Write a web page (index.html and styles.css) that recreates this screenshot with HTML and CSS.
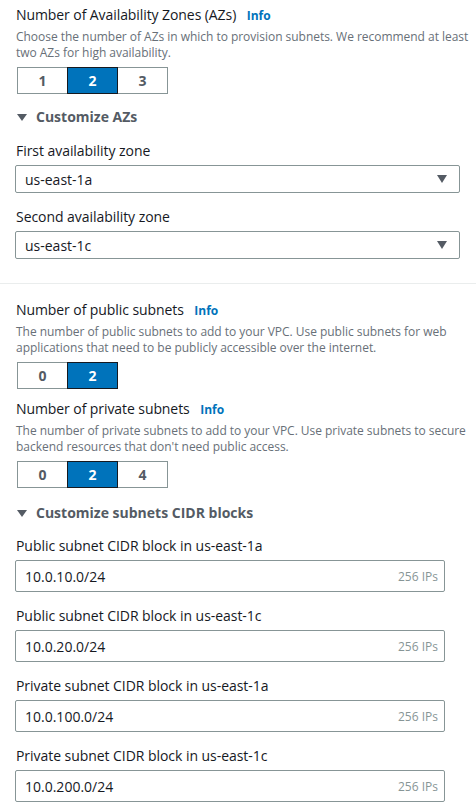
FILE: index.html
```html
<!DOCTYPE html>
<html>
<head>
<meta charset="utf-8">
<link rel="stylesheet" href="styles.css">
</head>
<body>
<div class="page">
  <section class="sec sec-top">
    <div class="title">Number of Availability Zones (AZs) <span class="info">Info</span></div>
    <p class="desc">Choose the number of AZs in which to provision subnets. We recommend at least two AZs for high availability.</p>
    <div class="seg">
      <span class="seg-item">1</span>
      <span class="seg-item on">2</span>
      <span class="seg-item">3</span>
    </div>
    <div class="expander"><span class="caret"></span>Customize AZs</div>
    <div class="field">
      <div class="label">First availability zone</div>
      <div class="select">us-east-1a<span class="arrow"></span></div>
    </div>
    <div class="field">
      <div class="label">Second availability zone</div>
      <div class="select">us-east-1c<span class="arrow"></span></div>
    </div>
  </section>
  <hr class="divider">
  <section class="sec sec-sub">
    <div class="title">Number of public subnets <span class="info">Info</span></div>
    <p class="desc">The number of public subnets to add to your VPC. Use public subnets for web applications that need to be publicly accessible over the internet.</p>
    <div class="seg">
      <span class="seg-item">0</span>
      <span class="seg-item on">2</span>
    </div>
    <div class="title title2">Number of private subnets <span class="info">Info</span></div>
    <p class="desc">The number of private subnets to add to your VPC. Use private subnets to secure backend resources that don't need public access.</p>
    <div class="seg">
      <span class="seg-item">0</span>
      <span class="seg-item on">2</span>
      <span class="seg-item">4</span>
    </div>
    <div class="expander exp2"><span class="caret"></span>Customize subnets CIDR blocks</div>
    <div class="field cidr first">
      <div class="label">Public subnet CIDR block in us-east-1a</div>
      <div class="input">10.0.10.0/24<span class="ips">256 IPs</span></div>
    </div>
    <div class="field cidr">
      <div class="label">Public subnet CIDR block in us-east-1c</div>
      <div class="input">10.0.20.0/24<span class="ips">256 IPs</span></div>
    </div>
    <div class="field cidr">
      <div class="label">Private subnet CIDR block in us-east-1a</div>
      <div class="input">10.0.100.0/24<span class="ips">256 IPs</span></div>
    </div>
    <div class="field cidr">
      <div class="label">Private subnet CIDR block in us-east-1c</div>
      <div class="input">10.0.200.0/24<span class="ips">256 IPs</span></div>
    </div>
  </section>
</div>
</body>
</html>
```
FILE: styles.css
```css
* { box-sizing: border-box; }
html, body { margin: 0; padding: 0; background: #fff; }
body {
  font-family: "Open Sans", "Noto Sans", sans-serif;
  color: #16191f;
  width: 476px;
  height: 807px;
  overflow: hidden;
}
.sec { padding: 0 5px 0 15px; }
.sec-top { padding-top: 5px; }
.title {
  font-size: 14px;
  line-height: 20px;
  padding-left: 1px;
  color: #16191f;
  letter-spacing: -0.08px;
}
.info {
  color: #0073bb;
  font-weight: 700;
  font-size: 12px;
  margin-left: 7px;
  letter-spacing: 0;
}
.desc {
  margin: 3px 0 0 0;
  padding-left: 1px;
  font-size: 12px;
  line-height: 16px;
  color: #687078;
  letter-spacing: -0.03px;
}
.seg {
  display: flex;
  margin: 6px 0 0 2px;
}
.seg-item {
  width: 51px;
  height: 27px;
  border: 1px solid #879596;
  display: flex;
  align-items: center;
  justify-content: center;
  font-weight: 700;
  font-size: 14px;
  color: #545b64;
  background: #fff;
}
.seg-item + .seg-item { margin-left: -1px; }
.seg-item.on {
  background: #0073bb;
  border-color: #16191f;
  color: #fff;
  position: relative;
}
.expander {
  display: flex;
  align-items: center;
  margin-top: 13px;
  padding-left: 2px;
  font-size: 14px;
  line-height: 20px;
  font-weight: 700;
  color: #545b64;
}
.exp2 { margin-top: 15px; }
.caret {
  width: 0;
  height: 0;
  border-left: 5px solid transparent;
  border-right: 5px solid transparent;
  border-top: 7px solid #545b64;
  margin-right: 9px;
}
.field { margin-top: 14px; }
.label {
  font-size: 14px;
  line-height: 20px;
  padding-left: 1px;
  margin-bottom: 4px;
  letter-spacing: -0.05px;
}
.select {
  width: 445px;
  height: 28px;
  border: 1px solid #879596;
  border-radius: 2px;
  display: flex;
  align-items: center;
  justify-content: space-between;
  padding: 0 12px 0 9px;
  font-size: 14px;
}
.arrow {
  width: 0;
  height: 0;
  border-left: 5px solid transparent;
  border-right: 5px solid transparent;
  border-top: 8px solid #545b64;
}
.divider {
  border: 0;
  border-top: 1px solid #eaeded;
  margin: 24px 0 0 0;
}
.sec-sub { padding-top: 16px; }
.title2 { margin-top: 10px; }
.cidr { margin-top: 14px; }
.cidr.first { margin-top: 13px; }
.input {
  width: 430px;
  height: 32px;
  border: 1px solid #879596;
  border-radius: 2px;
  display: flex;
  align-items: center;
  justify-content: space-between;
  padding: 0 6px 0 9px;
  font-size: 14px;
}
.ips {
  font-size: 12px;
  color: #879596;
}
```
